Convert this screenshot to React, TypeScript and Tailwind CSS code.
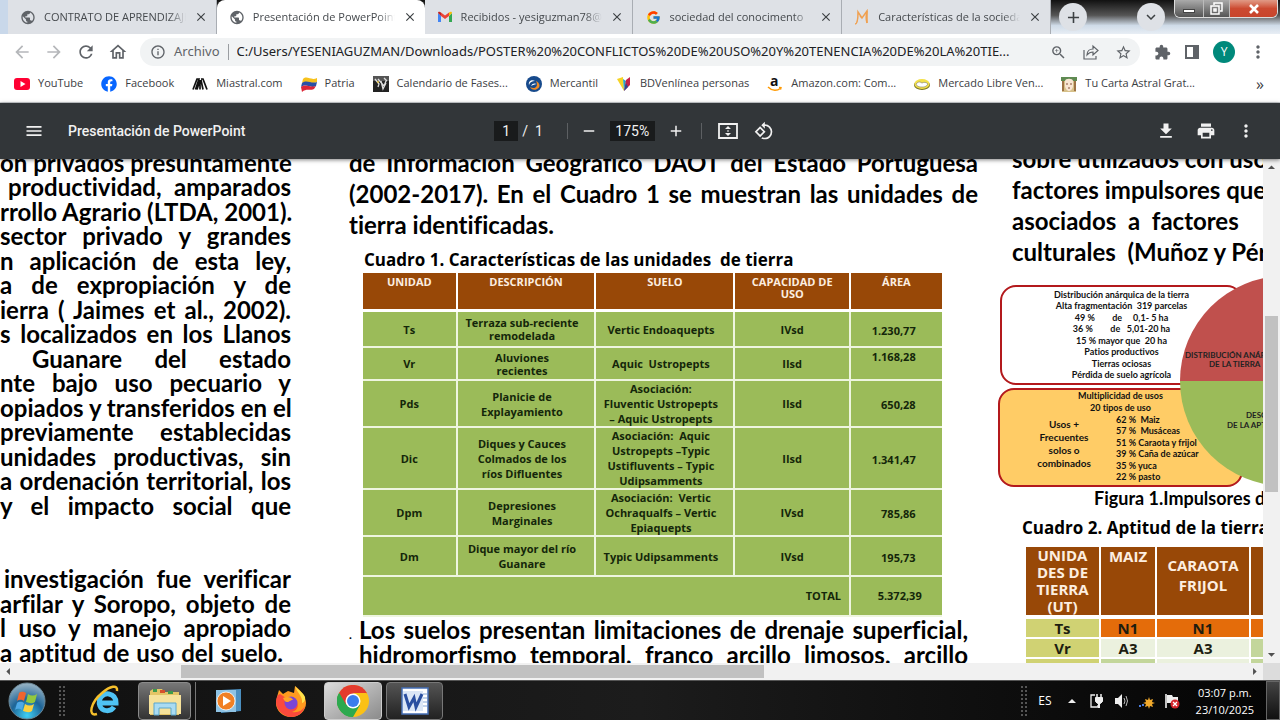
import React from 'react';
import {
  MdPublic, MdClose, MdAdd, MdExpandMore, MdArrowBack, MdArrowForward, MdRefresh, MdOutlineHome,
  MdInfoOutline, MdZoomIn, MdStarBorder, MdExtension, MdMoreVert, MdMenu, MdRemove, MdPrint,
  MdArrowDropUp, MdArrowDropDown, MdArrowLeft, MdArrowRight,
} from 'react-icons/md';
import { FcGoogle } from 'react-icons/fc';
import { FaFacebook } from 'react-icons/fa';

const GmailIcon = () => (
  <svg width="16" height="16" viewBox="0 0 16 16">
    <path d="M1 4v9h3V7z" fill="#4285f4" />
    <path d="M15 4v9h-3V7z" fill="#34a853" />
    <path d="M1 4l3 3V3.5L3 3C2 2.600 1 3 1 4z" fill="#c5221f" />
    <path d="M15 4l-3 3V3.500l1-.5c1-.4 2 0 2 1z" fill="#fbbc04" />
    <path d="M4 3.500l4 3 4-3V7l-4 3-4-3z" fill="#ea4335" />
  </svg>
);

const MonkeyIcon = () => (
  <svg width="16" height="16" viewBox="0 0 16 16" fill="none" stroke="#f0a050" strokeWidth="1.500">
    <path d="M1 15c2 0 3-3 3-12l4 6 5-7v12M6 7l2 2" />
    <path d="M13 2c-1 4-1 9 0 12" />
  </svg>
);

interface Tab {
  title: string;
  icon: React.ReactNode;
  active?: boolean;
}

const tabs: Tab[] = [
  { title: 'CONTRATO DE APRENDIZAJE', icon: <MdPublic size={17} color="#5f6368" /> },
  { title: 'Presentación de PowerPoint', icon: <MdPublic size={17} color="#5f6368" />, active: true },
  { title: 'Recibidos - yesiguzman78@gmail', icon: <GmailIcon /> },
  { title: 'sociedad del conocimento', icon: <FcGoogle size={15} /> },
  { title: 'Características de la sociedad', icon: <MonkeyIcon /> },
];

const bookmarks = [
  {
    name: 'YouTube',
    icon: <><rect y="2" width="16" height="12" rx="3" fill="#f03" /><path d="M6.500 5v6l5-3z" fill="#fff" /></>,
  },
  { name: 'Facebook', icon: <FaFacebook size={16} color="#0866ff" /> },
  {
    name: 'Miastral.com',
    icon: <path d="M1 13.500L5 3h2l-3.500 10.500M5 13.500L8 4v9.500M9 4l2 9.500M9 3h2l4 10.500" fill="none" stroke="#111" strokeWidth="1.700" />,
  },
  {
    name: 'Patria',
    icon: (
      <>
        <path d="M2 3c4-4 8 2 14-1v4C10 9 6 4 1 7z" fill="#f7c21c" />
        <path d="M1 7c5-4 9 1 15-1l-1 4C9 13 6 7 0 11z" fill="#2a50a5" />
        <path d="M0 11c5-4 9 1 15-1l-2 3c-4 2-8-1-12 3z" fill="#dc2636" />
      </>
    ),
  },
  {
    name: 'Calendario de Fases...',
    icon: (
      <>
        <rect width="16" height="16" fill="#222" />
        <path d="M0 0h16v5H0z" fill="#555" />
        <path d="M2 3l4 5-1 3M5 3l6 7 2-5M8 5l2 8 3-6M11 2l3 3" stroke="#ddd" strokeWidth="1.300" fill="none" />
        <circle cx="5" cy="6" r="1" fill="#e8c54a" />
      </>
    ),
  },
  {
    name: 'Mercantil',
    icon: (
      <>
        <circle cx="8" cy="8" r="8" fill="#174a8c" />
        <path d="M4 11c5 3 9-1 6-6 4 2 5 6 1 8-3 2-6 0-7-2z" fill="#f08a24" />
        <path d="M3 9c-1-4 3-6 6-4-3 0-5 1-6 4zM5 10c1-3 4-3 6-2-2 0-4 1-6 2z" fill="#fff" />
      </>
    ),
  },
  {
    name: 'BDVenlínea personas',
    icon: (
      <>
        <path d="M1 3l6-2 1 14z" fill="#f5d327" />
        <path d="M7 3l3 2-2 10z" fill="#26a6c9" />
        <path d="M10 4l4-3v8l-6 6z" fill="#c4224a" />
        <path d="M8 15l2-8 2 4z" fill="#2b4a93" />
      </>
    ),
  },
  {
    name: 'Amazon.com: Com...',
    icon: (
      <>
        <text x="3" y="10" className="font-bold" fontFamily="Open Sans" fontSize="14" fill="#111">a</text>
        <path d="M1 11c4 4 9 4 13 1M12 11.500l2 .2-.5 2" fill="none" stroke="#f90" strokeWidth="1.400" />
      </>
    ),
  },
  {
    name: 'Mercado Libre Ven...',
    icon: (
      <>
        <ellipse cx="8" cy="9" rx="8" ry="5" fill="#7a7420" />
        <ellipse cx="8" cy="8" rx="7.500" ry="5" fill="#f3e04a" />
        <path d="M2 8c3-3 4-2 6-1 2-1 4-1 6 1-2 3-4 3-6 3s-5 0-6-3z" fill="#fff" stroke="#776" strokeWidth=".6" />
      </>
    ),
  },
  {
    name: 'Tu Carta Astral Grat...',
    icon: (
      <>
        <path d="M1 2h14v14H1z" fill="#d6c08a" />
        <path d="M0 1h16v4H0z" fill="#5f8a52" />
        <path d="M4 5c0-3 8-3 8 0v5c0 3-3 5-4 5s-4-2-4-5z" fill="#f8e6d4" />
        <path d="M5 8h2M9 8h2M7 12h2" stroke="#84503a" />
        <path d="M2 5v10M14 5v10" stroke="#8a5a30" strokeWidth="1.500" />
      </>
    ),
  },
];

const leftLines = [
  ['on privados presuntamente', ''],
  ['productividad, amparados', 'pl-2'],
  ['rrollo Agrario (LTDA, 2001).', ''],
  ['sector privado y grandes', ''],
  ['n aplicación de esta ley,', ''],
  ['a de expropiación y de', ''],
  ['ierra ( Jaimes et al., 2002).', ''],
  ['s localizados en los Llanos', ''],
  ['Guanare del estado', 'pl-8'],
  ['nte bajo uso pecuario y', ''],
  ['opiados y transferidos en el', ''],
  ['previamente establecidas', ''],
  ['unidades productivas, sin', ''],
  ['a ordenación territorial, los', ''],
  ['y el impacto social que', ''],
  ['', ''],
  ['', ''],
  ['investigación  fue verificar', 'pl-1'],
  ['arfilar y Soropo, objeto de', ''],
  ['l uso y  manejo apropiado', ''],
  ['a  aptitud de uso del suelo.', 'pr-2'],
];

const soilRows = [
  { unit: 'Ts', desc: ['Terraza sub-reciente', 'remodelada'], soil: ['Vertic Endoaquepts'], cap: 'IVsd', area: '1.230,77', cls: 'h-9 leading-[13px]' },
  { unit: 'Vr', desc: ['Aluviones', 'recientes'], soil: ['Aquic  Ustropepts'], cap: 'IIsd', area: '1.168,28', cls: 'h-[33px] leading-[13px]' },
  { unit: 'Pds', desc: ['Planicie de', 'Explayamiento'], soil: ['Asociación:', 'Fluventic Ustropepts', '– Aquic Ustropepts'], cap: 'IIsd', area: '650,28', cls: 'h-[47px] leading-[15px]' },
  { unit: 'Dic', desc: ['Diques y Cauces', 'Colmados de los', 'ríos Difluentes'], soil: ['Asociación:  Aquic', 'Ustropepts –Typic', 'Ustifluvents – Typic', 'Udipsamments'], cap: 'IIsd', area: '1.341,47', cls: 'h-[61px] leading-[15px]' },
  { unit: 'Dpm', desc: ['Depresiones', 'Marginales'], soil: ['Asociación:  Vertic', 'Ochraqualfs – Vertic', 'Epiaquepts'], cap: 'IVsd', area: '785,86', cls: 'h-[46px] leading-[15px]' },
  { unit: 'Dm', desc: ['Dique mayor del río', 'Guanare'], soil: ['Typic Udipsamments'], cap: 'IVsd', area: '195,73', cls: 'h-10 leading-[15px]' },
];

const anarchyLines = [
  'Distribución anárquica de la tierra',
  'Alta fragmentación  319 parcelas',
  '49 %        de     0,1- 5 ha',
  '36 %        de   5,01-20 ha',
  '15 % mayor que  20 ha',
  'Patios productivos',
  'Tierras ociosas',
  'Pérdida de suelo agrícola',
];

const usageLines = ['62 %  Maiz', '57 %  Musáceas', '51 % Caraota y frijol', '39 % Caña de azúcar', '35 % yuca', '22 % pasto'];

const JustifiedLine = ({ text, className }: { text: string; className: string }) => (
  <div className={`text-justify [text-align-last:justify] whitespace-nowrap ${className}`}>{text}</div>
);

const TabStrip = () => (
  <div className="flex h-[34px] bg-[linear-gradient(to_bottom,#111_0%,#555_45%,#cfdbe8_75%,#e8eef5_100%)]">
    <div className="w-2 bg-[#c9d8ea]" />
    <div className="flex w-[1043px] min-w-0 shrink" role="tablist">
      {tabs.map((tab) => (
        <div
          key={tab.title}
          className={`flex flex-1 min-w-0 items-center pl-3 pr-2 ${tab.active ? 'bg-white rounded-t-lg' : 'bg-[#dee1e6] border-r border-[#a9adb3]'}`}
        >
          <button role="tab" aria-selected={!!tab.active} className="flex flex-1 min-w-0 items-center gap-2">
            <span className="flex w-4 shrink-0 justify-center">{tab.icon}</span>
            <span className="flex-1 overflow-hidden whitespace-nowrap text-left text-[11px] text-[#45494d] [mask-image:linear-gradient(to_right,black_88%,transparent)]">
              {tab.title}
            </span>
          </button>
          <button aria-label="Cerrar pestaña" className="ml-2 text-[#3c4043]"><MdClose size={14} /></button>
        </div>
      ))}
    </div>
    <div className="flex flex-1 items-start justify-between pl-2">
      <button aria-label="Nueva pestaña" className="mt-[3px] flex size-7 items-center justify-center rounded-full bg-[#dee1e6] text-[#3c4043]">
        <MdAdd size={19} />
      </button>
      <div className="flex items-start gap-[9px] pr-[2px]">
        <button aria-label="Buscar pestañas" className="mt-[3px] flex size-7 items-center justify-center rounded-full bg-[#dee1e6] text-[#3c4043]">
          <MdExpandMore size={18} />
        </button>
        <div className="flex h-[18px] overflow-hidden rounded-b-md border border-t-0 border-[#ddd]">
          <button aria-label="Minimizar" className="flex w-[29px] items-end justify-center border-r border-[#bbb] bg-linear-to-b from-[#aaa] to-[#555] pb-[4px]">
            <span className="h-1 w-3 border border-[#444] bg-white" />
          </button>
          <button aria-label="Restaurar" className="flex w-[26px] items-center justify-center border-r border-[#bbb] bg-linear-to-b from-[#aaa] to-[#555]">
            <svg width="13" height="13" viewBox="0 0 13 13" fill="none" stroke="#fff" strokeWidth="1.500">
              <path d="M4 3V1h8v8h-2M1 4h8v8H1zM4 7h2v2H4z" />
            </svg>
          </button>
          <button aria-label="Cerrar" className="flex w-[47px] items-center justify-center bg-linear-to-b from-[#e09a86] via-[#cc4a31] to-[#c8452c] text-white">
            <svg width="12" height="10" viewBox="0 0 12 10"><path d="M2 1l8 8M10 1L2 9" stroke="#fff" strokeWidth="2.600" /></svg>
          </button>
        </div>
      </div>
    </div>
  </div>
);

const AddressBar = () => (
  <div className="flex h-9 items-center bg-white pl-3 pr-3 text-[#5f6368]">
    <div className="flex w-32 items-center gap-3">
      <button aria-label="Atrás" className="text-[#b5b7ba]"><MdArrowBack size={20} /></button>
      <button aria-label="Adelante" className="text-[#b5b7ba]"><MdArrowForward size={20} /></button>
      <button aria-label="Recargar"><MdRefresh size={20} /></button>
      <button aria-label="Inicio"><MdOutlineHome size={20} /></button>
    </div>
    <div className="flex h-7 flex-1 items-center rounded-full bg-[#f1f3f4] pl-[10px] pr-2 font-['Noto_Sans']">
      <MdInfoOutline size={16} />
      <label htmlFor="url" className="ml-2 text-[13px]">Archivo</label>
      <span className="mx-2 h-4 w-px bg-[#9a9da1]" />
      <input
        id="url"
        className="min-w-0 flex-1 bg-transparent text-[13px] text-[#202124] outline-none"
        defaultValue="C:/Users/YESENIAGUZMAN/Downloads/POSTER%20%20CONFLICTOS%20DE%20USO%20Y%20TENENCIA%20DE%20LA%20TIE..."
      />
      <div className="flex items-center gap-4">
        <button aria-label="Zoom"><MdZoomIn size={17} /></button>
        <button aria-label="Compartir">
          <svg width="16" height="16" viewBox="0 0 16 16" fill="none" stroke="#5f6368" strokeWidth="1.200">
            <path d="M1 6v9h12v-3M4 11c0-4 3-6 6-6V2l5 4.500-5 4.500V8c-3 0-4 .5-6 3z" />
          </svg>
        </button>
        <button aria-label="Favorito"><MdStarBorder size={17} /></button>
      </div>
    </div>
    <div className="flex items-center gap-[13px] pl-[14px]">
      <button aria-label="Extensiones"><MdExtension size={17} /></button>
      <button aria-label="Panel lateral">
        <svg width="16" height="16" viewBox="0 0 16 16"><path d="M1 1h14v14H1zM3 3v10h6V3z" fill="#5f6368" fillRule="evenodd" /></svg>
      </button>
      <button className="flex size-[22px] items-center justify-center rounded-full bg-[#00897b] text-xs text-white">Y</button>
      <button aria-label="Menú"><MdMoreVert size={20} /></button>
    </div>
  </div>
);

const BookmarksBar = () => (
  <nav className="flex h-[33px] items-center gap-[18px] border-b border-[#d0d3d6] bg-white pb-[5px] pl-[14px] pr-4 text-[11px] text-[#3c4043]">
    {bookmarks.map((b) => (
      <a key={b.name} href="#" className="flex items-center gap-2 whitespace-nowrap">
        <svg width="16" height="16" viewBox="0 0 16 16">{b.icon}</svg>
        {b.name}
      </a>
    ))}
    <button aria-label="Más marcadores" className="ml-auto text-base leading-4">»</button>
  </nav>
);

const PdfToolbar = () => (
  <div className="relative z-10 flex h-14 items-center bg-[#323639] px-6 font-[Roboto] text-sm text-[#f1f1f1] shadow-[0_1px_4px_rgba(0,0,0,0.5)]">
    <div className="flex flex-1 items-center gap-6">
      <button aria-label="Menú"><MdMenu size={20} /></button>
      <span className="font-medium">Presentación de PowerPoint</span>
    </div>
    <div className="flex items-center pr-3">
      <input aria-label="Página" defaultValue="1" className="h-5 w-6 bg-[#191b1c] text-center" />
      <span className="ml-1 whitespace-pre">/  1</span>
      <span className="ml-6 mr-5 h-4 w-px bg-[#5d6063]" />
      <button aria-label="Alejar" className="-ml-2"><MdRemove size={18} /></button>
      <input aria-label="Zoom" defaultValue="175%" className="mx-3 h-5 w-[45px] bg-[#191b1c] text-center" />
      <button aria-label="Acercar"><MdAdd size={18} /></button>
      <span className="mx-4 h-4 w-px bg-[#5d6063]" />
      <button aria-label="Ajustar a la página">
        <svg width="20" height="18" viewBox="0 0 20 18"><path d="M1 2h18v14H1z" fill="none" stroke="#f1f1f1" strokeWidth="1.800" /><path d="M10 4l3 3H7zM10 14l3-3H7zM9.500 8h1v2h-1z" fill="#f1f1f1" /></svg>
      </button>
      <button aria-label="Girar" className="ml-4">
        <svg width="20" height="20" viewBox="0 0 24 24" fill="#f1f1f1">
          <path d="M7.340 6.410L.860 12.900l6.490 6.480 6.490-6.480-6.500-6.490zM3.690 12.900l3.660-3.660L11 12.900l-3.660 3.660-3.650-3.660zm15.670-6.260A8.950 8.950 0 0 0 13 4V.760L8.760 5 13 9.240V6c1.790 0 3.580.680 4.950 2.050a7.007 7.007 0 0 1 0 9.900 6.973 6.973 0 0 1-7.790 1.440l-1.490 1.490C10.020 21.620 11.510 22 13 22c2.300 0 4.610-.880 6.360-2.640a8.980 8.980 0 0 0 0-12.720z" />
        </svg>
      </button>
    </div>
    <div className="flex flex-1 items-center justify-end gap-5">
      <button aria-label="Descargar">
        <svg width="20" height="20" viewBox="0 0 24 24" fill="#f1f1f1"><path d="M19 9h-4V3H9v6H5l7 7 7-7zM5 18v2h14v-2H5z" /></svg>
      </button>
      <button aria-label="Imprimir"><MdPrint size={20} /></button>
      <button aria-label="Más"><MdMoreVert size={20} /></button>
    </div>
  </div>
);

const SoilTable = () => (
  <table className="ml-[14px] w-[92%] table-fixed border-separate border-spacing-0 text-center font-['Open_Sans'] text-[11px] font-bold text-[#14260a]">
    <colgroup>
      <col className="w-[16%]" />
      <col className="w-[24%]" />
      <col className="w-[24%]" />
      <col className="w-[20%]" />
      <col className="w-[16%]" />
    </colgroup>
    <thead>
      <tr className="h-[39px] bg-[#984807] align-top leading-3 text-[#fdeee0]">
        {['UNIDAD', 'DESCRIPCIÓN', 'SUELO', 'CAPACIDAD DE USO', 'ÁREA'].map((h) => (
          <th key={h} className="border-b-[3px] border-l-2 border-white px-3 pt-[3px] first:border-l-0">{h}</th>
        ))}
      </tr>
    </thead>
    <tbody className="bg-[#9bbb59] [&_td]:border-b-2 [&_td]:border-l-2 [&_td]:border-[#eef5df] [&_td]:p-0 [&_td:first-child]:border-l-0">
      {soilRows.map((row) => (
        <tr key={row.unit} className={row.cls}>
          <td>{row.unit}</td>
          <td>{row.desc.map((t) => <div key={t} className="whitespace-nowrap pr-2">{t}</div>)}</td>
          <td>{row.soil.map((t) => <div key={t} className="whitespace-pre pr-2">{t}</div>)}</td>
          <td>{row.cap}</td>
          <td className={row.unit === 'Vr' ? 'align-top' : ''}><div className="pr-[26px] pt-[2px] text-right">{row.area}</div></td>
        </tr>
      ))}
      <tr className="h-10">
        <td colSpan={4}><div className="pr-2 text-right">TOTAL</div></td>
        <td><div className="pr-5 text-right">5.372,39</div></td>
      </tr>
    </tbody>
  </table>
);

const DriversFigure = () => (
  <div className="relative mt-[9px] pt-[9px] text-[9px] font-bold leading-3 text-[#111]">
    <div className="ml-[2px] mr-5 h-[100px] rounded-[16px] border-2 border-[#b3191c] bg-white pt-[2px] text-center">
      {anarchyLines.map((t) => <div key={t} className="whitespace-pre odd:h-[11px]">{t}</div>)}
    </div>
    <div className="mr-5 mt-[3px] h-[99px] rounded-[16px] border-2 border-[#b3191c] bg-[#ffcc66]">
      <div className="text-center">
        <div>Multiplicidad de usos</div>
        <div>20 tipos de uso</div>
      </div>
      <div className="flex">
        <div className="w-32 pt-1 text-center text-[10px] leading-[13px]">
          <div>Usos +</div>
          <div>Frecuentes</div>
          <div>solos o</div>
          <div>combinados</div>
        </div>
        <div className="-ml-3">
          {usageLines.map((t) => <div key={t} className="whitespace-pre odd:h-[11px]">{t}</div>)}
        </div>
      </div>
    </div>
    <svg className="absolute right-0 top-0" width="83" height="211" viewBox="0 0 83 211">
      <path d="M0 105A105 105 0 0 1 105 0V105z" fill="#c0504d" />
      <path d="M0 105A105 105 0 0 0 105 210V105z" fill="#9bbb59" />
      <g fontSize="8" fill="#222" className="font-bold">
        <text x="5" y="82">DISTRIBUCIÓN ANÁRQUICA</text>
        <text x="29" y="91">DE LA TIERRA</text>
        <text x="66" y="142">DESCONOCIMIENTO</text>
        <text x="47" y="152">DE LA APTITUD</text>
      </g>
    </svg>
  </div>
);

const AptitudeTable = () => (
  <table className="ml-7 w-[300px] table-fixed border-separate border-spacing-0 text-center font-['Open_Sans'] text-[15px] font-bold text-[#1d1d10] [&_td]:border-b-2 [&_td]:border-r-2 [&_td]:border-white [&_td]:p-0">
    <colgroup>
      <col className="w-[75px]" />
      <col className="w-[56px]" />
      <col className="w-[94px]" />
      <col className="w-[75px]" />
    </colgroup>
    <thead>
      <tr className="h-[72px] bg-[#984807] text-[#fdeee0] [&_th]:border-b-4 [&_th]:border-r-2 [&_th]:border-white">
        <th className="p-0 leading-[17px]">UNIDA<br />DES DE<br />TIERRA<br />(UT)</th>
        <th className="p-0 align-top leading-[18px]">MAIZ</th>
        <th className="p-0 pb-3 leading-5">CARAOTA<br />FRIJOL</th>
        <th className="p-0 pl-3 text-left align-top leading-[18px]">MUSÁ</th>
      </tr>
    </thead>
    <tbody className="leading-[18px]">
      <tr className="h-5">
        <td className="bg-[#d0d273]">Ts</td>
        <td className="bg-[#e46c0a]">N1</td>
        <td className="bg-[#e46c0a]">N1</td>
        <td className="bg-[#e46c0a]" />
      </tr>
      <tr className="h-5">
        <td className="bg-[#d0d273]">Vr</td>
        <td className="bg-[#ebf1de]">A3</td>
        <td className="bg-[#ebf1de]">A3</td>
        <td className="bg-[#c3d69b]" />
      </tr>
      <tr className="h-5">
        <td className="bg-[#d0d273]" />
        <td className="bg-[#c3d69b]" />
        <td className="bg-[#ebf1de]" />
        <td className="bg-[#c3d69b]" />
      </tr>
    </tbody>
  </table>
);

const PdfPage = () => (
  <main className="grid min-w-0 flex-1 grid-cols-[291fr_687fr_285fr] grid-rows-[minmax(0,1fr)] overflow-hidden bg-white font-[Lato] text-2xl font-bold text-black [font-variant-ligatures:none]">
    <section className="-mt-2 min-w-0">
      {leftLines.map(([text, pad], i) => (
        <JustifiedLine key={i} text={text} className={`h-[25px] leading-6 odd:h-6 ${pad}`} />
      ))}
    </section>
    <section className="-mt-3 min-w-0 pl-[58px]">
      <JustifiedLine text="de Información Geográfico DAOT del Estado Portuguesa" className="leading-[31px]" />
      <JustifiedLine text="(2002-2017). En el  Cuadro 1 se muestran las unidades de" className="leading-[31px]" />
      <div className="leading-[31px]">tierra identificadas.</div>
      <h2 className="mt-[7px] whitespace-pre pl-[15px] font-['Open_Sans'] text-[17px] leading-[26px]">
        Cuadro 1. Características de las unidades  de tierra
      </h2>
      <SoilTable />
      <div className="flex leading-[25px]">
        <span className="w-[10px] text-xs leading-9">.</span>
        <div className="min-w-0 flex-1 pr-[10px]">
          <JustifiedLine text="Los suelos presentan limitaciones de drenaje superficial," className="" />
          <JustifiedLine text="hidromorfismo temporal, franco arcillo limosos, arcillo" className="" />
        </div>
      </div>
    </section>
    <section className="-mt-4 min-w-0 overflow-hidden pl-5">
      <div className="whitespace-pre pl-[14px] leading-[31px]">
        <p>sobre utilizados con usos</p>
        <p>factores impulsores que</p>
        <p>asociados  a  factores</p>
        <p>culturales  (Muñoz y Pérez</p>
      </div>
      <DriversFigure />
      <p className="whitespace-nowrap pl-24 text-lg leading-[22px]">Figura 1.Impulsores de</p>
      <h2 className="mb-[7px] mt-[7px] whitespace-nowrap pl-6 font-['Open_Sans'] text-[17px] leading-6">Cuadro 2. Aptitud de la tierra</h2>
      <AptitudeTable />
    </section>
  </main>
);

const Taskbar = () => (
  <footer className="flex h-10 items-center border-t border-[#555] bg-linear-to-r from-[#101010] via-[#1c1c1c] to-[#050505] text-white">
    <button aria-label="Inicio" className="ml-2">
      <svg width="38" height="38" viewBox="0 0 38 38">
        <defs>
          <radialGradient id="orb" cx="50%" cy="90%" r="90%">
            <stop offset="0" stopColor="#3fd0f5" />
            <stop offset=".5" stopColor="#1d6497" />
            <stop offset="1" stopColor="#9cb6c6" />
          </radialGradient>
        </defs>
        <circle cx="19" cy="19" r="18" fill="url(#orb)" stroke="#6b8796" />
        <path d="M11 11c3-2 5-1 7 0l-2 8c-2-1-4-2-7 0z" fill="#f0652f" />
        <path d="M20 12c3 2 6 2 9 0l-2 8c-3 2-6 1-9 0z" fill="#93c83e" />
        <path d="M9 21c3-2 5-1 7 0l-2 7c-2-1-4-2-7 0z" fill="#4ea9e6" />
        <path d="M17 22c3 2 6 2 9 0l-2 7c-3 2-6 1-9 0z" fill="#fbd140" />
      </svg>
    </button>
    <div className="ml-3 h-8 w-2 bg-[radial-gradient(#555_1px,transparent_1px)] bg-[size:4px_4px]" />
    <button aria-label="Internet Explorer" className="ml-[23px]">
      <svg width="32" height="32" viewBox="0 0 32 32" fill="none">
        <path d="M25 22c-3 5-12 5-14-1-3-8 4-13 9-12 5 1 7 4 7 9H11" stroke="#4fc3f3" strokeWidth="5" />
        <path d="M8 29C-2 32 2 17 13 8 21 1 29-1 28 6" stroke="#f6c02c" strokeWidth="2.500" />
      </svg>
    </button>
    <button aria-label="Explorador" className="ml-[17px] flex h-[38px] w-[53px] items-center justify-center rounded-sm border border-[#8a8a8a] bg-linear-to-b from-[#777] to-[#333]">
      <svg width="34" height="30" viewBox="0 0 34 30">
        <path d="M2 5l3-2h9l2 3h15v23H2z" fill="#e4c566" />
        <path d="M5 3h4v3H5zM20 5h5v3h-5z" fill="#3f9b4c" />
        <path d="M12 4h5v3h-5z" fill="#d8502c" />
        <path d="M1 9h32v19H1z" fill="#f6e29b" />
        <path d="M6 29V17h22v12h-5v-7H11v7z" fill="#a9dbf2" stroke="#5aa6cc" />
      </svg>
    </button>
    <span className="ml-[2px] h-[38px] w-[3px] border-r border-[#777]" />
    <button aria-label="Reproductor" className="ml-[18px]">
      <svg width="28" height="28" viewBox="0 0 28 28">
        <path d="M7 3l20-1v22l-20 2z" fill="#4b8fc0" />
        <path d="M2 3h20v22H2z" fill="#8fc3e4" />
        <circle cx="12" cy="14" r="9" fill="#f08025" stroke="#fff" strokeWidth=".8" />
        <path d="M9 9v10l8-5z" fill="#fff" />
      </svg>
    </button>
    <button aria-label="Firefox" className="ml-[33px]">
      <svg width="32" height="32" viewBox="0 0 32 32">
        <path d="M2 12l2-7 4 4 5-3 6 2 1-7c5 4 11 10 11 17 0 8-7 14-15 14S1 26 1 18z" fill="#ff9a1f" />
        <path d="M1 17c0-4 2-8 4-8l6 4 7 1c7 4 6 11-1 13 6 1 10-1 13-6-2 7-7 11-14 11S1 25 1 17z" fill="#fb4a3c" />
        <path d="M20 1c2 7 8 10 7 17 4-1 3-6 3-6-2-5-7-7-10-11z" fill="#ffe14a" />
        <circle cx="16" cy="18" r="6.500" fill="#7b45d6" />
        <path d="M8 13c4-2 9-1 10 2-3 0-3 2-6 2-2 0-3-2-4-4z" fill="#ffa526" />
      </svg>
    </button>
    <button aria-label="Chrome" className="ml-[17px] flex h-[38px] w-[58px] items-center justify-center rounded-sm border border-[#ccc] bg-linear-to-br from-[#ddd] to-[#8b8b8b]">
      <svg width="32" height="32" viewBox="0 0 32 32">
        <circle cx="16" cy="16" r="16" fill="#fbc116" />
        <path d="M16 16L2.100 8A16 16 0 0 1 29.900 8z" fill="#e33b2e" />
        <path d="M16 16L2.100 8A16 16 0 0 0 16 32l7-12z" fill="#2da94f" />
        <path d="M16 8h13.900L22 16z" fill="#fbc116" />
        <path d="M16 8.500V4L2.100 8l7 12z" fill="#e33b2e" />
        <path d="M2.100 8l7 12 7 4L16 32A16 16 0 0 1 2.100 8z" fill="#2da94f" />
        <circle cx="16" cy="16" r="7.500" fill="#fff" />
        <circle cx="16" cy="16" r="6" fill="#3b7ded" />
      </svg>
    </button>
    <button aria-label="Word" className="ml-1 flex h-[38px] w-[57px] items-center justify-center rounded-sm border border-[#777] bg-linear-to-b from-[#555] to-[#222]">
      <svg width="28" height="28" viewBox="0 0 28 28">
        <path d="M1 1h26v26H1z" fill="#fff" stroke="#456fb5" strokeWidth="1.500" />
        <path d="M21 7h5M21 11h5M21 15h5M21 19h5" stroke="#86a7d6" />
        <path d="M2 4h20v20H2z" fill="#dbe6f6" />
        <path d="M4 7l4 13 5-9 2 9 6-13" fill="none" stroke="#2a4fa0" strokeWidth="3" />
      </svg>
    </button>
    <div className="ml-auto h-8 w-2 bg-[radial-gradient(#555_1px,transparent_1px)] bg-[size:4px_4px]" />
    <span className="ml-[10px] text-xs">ES</span>
    <svg className="ml-4" width="9" height="6" viewBox="0 0 9 6"><path d="M0 5l4-4 4 4z" fill="#eee" /></svg>
    <div className="ml-3 flex items-center gap-[9px]">
      <svg width="16" height="16" viewBox="0 0 16 16" fill="none" stroke="#eee"><path d="M6 2H2v12h7v-2" strokeWidth="1.300" /><path d="M8 1v4M12 1v4" strokeWidth="1.500" /><path d="M6.500 4.500h7v4l-2 2h-3l-2-2z" fill="#eee" /><path d="M10 10v5" strokeWidth="2" /></svg>
      <svg width="16" height="16" viewBox="0 0 16 16"><path d="M1 5h3l4-4v14l-4-4H1z" fill="#eee" /><path d="M10 5q2 3 0 6M12 3q3 5 0 10" fill="none" stroke="#bbb" /></svg>
      <svg width="16" height="16" viewBox="0 0 16 16"><path d="M0 13h2M3 12h2" stroke="#4a7fe0" strokeWidth="2" /><path d="M10 4l1 3 3-1-1 3 3 1-3 1 1 3-3-1-1 3-1-3-3 1 1-3-3-1 3-1-1-3 3 1z" fill="#f0a92c" /></svg>
      <svg width="16" height="16" viewBox="0 0 16 16"><path d="M2 1v14" stroke="#fff" strokeWidth="1.500" /><path d="M3 2h5l1 2h5v6H3z" fill="#eee" /><circle cx="11" cy="11" r="4.500" fill="#d3242b" /><path d="M9 9l4 4M13 9l-4 4" stroke="#fff" strokeWidth="1.300" /></svg>
    </div>
    <div className="ml-4 text-center text-[11px] leading-[17px]">
      <div>03:07 p.m.</div>
      <div>23/10/2025</div>
    </div>
    <button aria-label="Mostrar escritorio" className="ml-3 h-full w-[14px] border border-[#666] bg-linear-to-b from-[#444] to-[#111]" />
  </footer>
);

const App: React.FC = () => {
  return (
    <div className="flex h-screen flex-col overflow-hidden bg-white font-['Open_Sans',sans-serif]">
      <TabStrip />
      <AddressBar />
      <BookmarksBar />
      <PdfToolbar />
      <div className="flex min-h-0 flex-1">
        <PdfPage />
        {/* Vertical scrollbar */}
        <div className="flex w-[17px] flex-col items-center bg-[#f1f1f1] text-[#505050]">
          <MdArrowDropUp size={17} />
          <div className="flex w-full flex-1 flex-col px-[2px]">
            <div className="flex-[140]" />
            <div className="flex-[177] bg-[#c1c1c1]" />
            <div className="flex-[154]" />
          </div>
          <MdArrowDropDown size={17} />
        </div>
      </div>
      {/* Horizontal scrollbar */}
      <div className="flex h-[17px] text-[#505050]">
        <div className="flex flex-1 items-center bg-[#f1f1f1]">
          <MdArrowLeft size={17} />
          <div className="flex h-[13px] flex-1">
            <div className="flex-[164]" />
            <div className="flex-[583] bg-[#c1c1c1]" />
            <div className="flex-[482]" />
          </div>
          <MdArrowRight size={17} />
        </div>
        <div className="w-[17px] bg-[#dcdcdc]" />
      </div>
      <Taskbar />
    </div>
  );
};

export default App;
